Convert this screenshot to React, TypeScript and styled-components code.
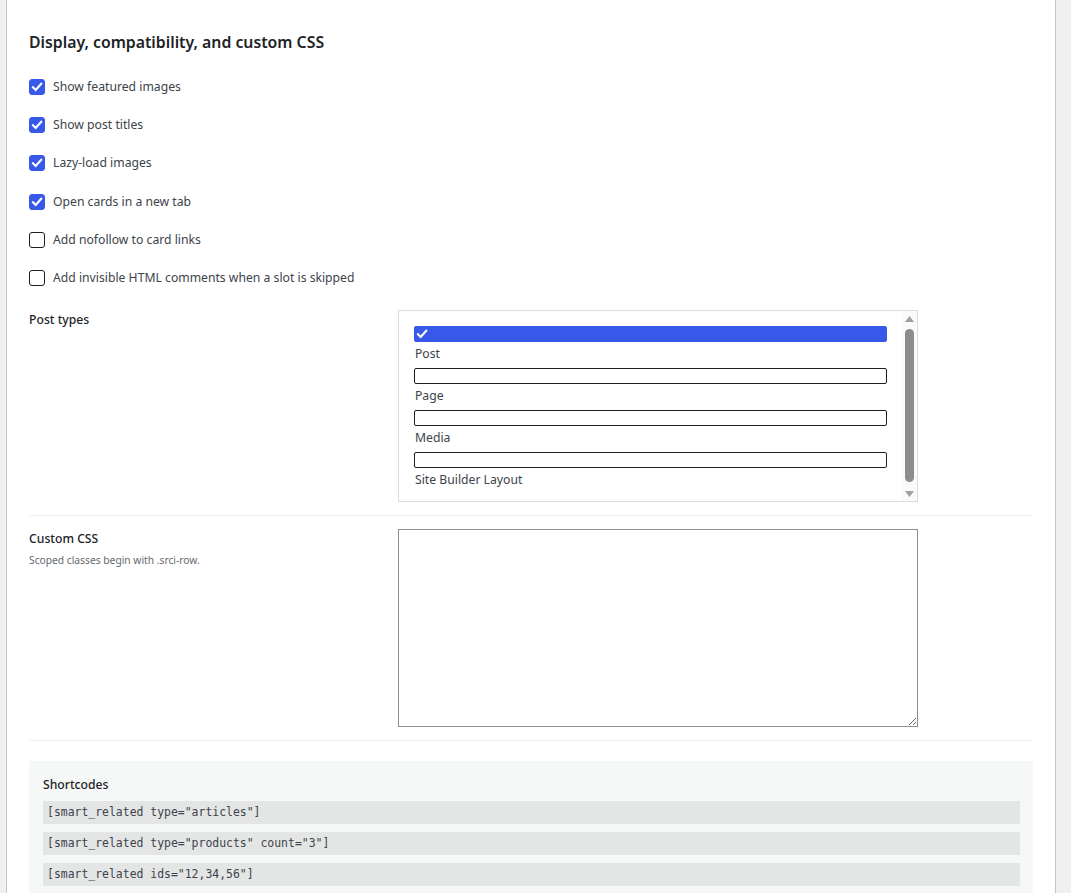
import React from "react";
import styled, { createGlobalStyle } from "styled-components";

const GlobalStyle = createGlobalStyle`
  * { box-sizing: border-box; }
  html, body { margin: 0; padding: 0; height: 100%; overflow: hidden; }
  body {
    background: #f0f0f1;
    font-family: "Noto Sans", "Open Sans", sans-serif;
    color: #3c434a;
  }
`;

const Page = styled.div`
  height: 100vh;
  padding: 0 15px 0 6px;
`;

const Card = styled.div`
  height: 100%;
  background: #fff;
  border-left: 1px solid #c3c4c7;
  border-right: 1px solid #c3c4c7;
  padding: 31px 22px 0;
`;

const Heading = styled.h2`
  margin: 0 0 25px;
  font-size: 15.8px;
  line-height: 22px;
  font-weight: 600;
  color: #1d2327;
`;

const CheckList = styled.div`
  display: flex;
  flex-direction: column;
  gap: 20.2px;
  margin-bottom: 23.25px;
`;

const CheckRow = styled.label`
  display: flex;
  align-items: center;
  gap: 8px;
  height: 18px;
  font-size: 12.2px;
  line-height: 18px;
  color: #3c434a;
`;

const Box = styled.span<{ $on: boolean }>`
  flex: none;
  width: 16px;
  height: 16px;
  border-radius: 3px;
  border: 1px solid ${(p) => (p.$on ? "#3858e9" : "#1e1e1e")};
  background: ${(p) => (p.$on ? "#3858e9" : "#fff")};
  display: flex;
  align-items: center;
  justify-content: center;
`;

const FieldRow = styled.div<{ $first?: boolean }>`
  display: grid;
  grid-template-columns: 369px 520px;
  padding: ${(p) => (p.$first ? "0" : "13px")} 0 13px;
  border-bottom: 1px solid #f0f0f1;
`;

const FieldLabel = styled.div`
  padding-top: 1px;
  font-size: 12.2px;
  line-height: 18px;
  font-weight: 500;
  color: #1d2327;
`;

const Hint = styled.div`
  margin-top: 5px;
  font-size: 10.25px;
  line-height: 14px;
  color: #646970;
`;

const ListBox = styled.div`
  display: flex;
  height: 192px;
  border: 1px solid #dcdcde;
`;

const ListScroll = styled.div`
  flex: 1;
  min-width: 0;
  overflow: hidden;
  padding: 15px;
`;

const ScrollBar = styled.div`
  flex: none;
  width: 15px;
  display: flex;
  flex-direction: column;
  align-items: center;
  background: #fafafa;
`;

const ScrollArrow = styled.div`
  flex: none;
  height: 15px;
  width: 15px;
  display: flex;
  align-items: center;
  justify-content: center;
`;

const Thumb = styled.div`
  flex: 1;
  width: 9px;
  margin: 3px 0 4px;
  border-radius: 5px;
  background: #8c8c8c;
`;

const ListItem = styled.div`
  display: flex;
  flex-direction: column;
`;

const Bar = styled.span<{ $on: boolean }>`
  display: flex;
  align-items: center;
  width: 100%;
  height: 16px;
  padding-left: 1px;
  border-radius: 2px;
  border: 1px solid ${(p) => (p.$on ? "#3858e9" : "#1e1e1e")};
  background: ${(p) => (p.$on ? "#3858e9" : "#fff")};
`;

const ItemText = styled.span`
  margin: 3px 0 6px;
  padding-left: 1px;
  font-size: 12.2px;
  line-height: 17px;
  color: #3c434a;
`;

const TextArea = styled.textarea`
  display: block;
  width: 520px;
  height: 198px;
  margin: 0;
  border: 1px solid #8c8f94;
  border-radius: 0;
  resize: vertical;
  font-family: "DejaVu Sans Mono", monospace;
  font-size: 12px;
`;

const Shortcodes = styled.div`
  margin-top: 20px;
  background: #f6f7f7;
  padding: 15px 13px 14px 14px;
`;

const ShortTitle = styled.div`
  margin-bottom: 8px;
  font-size: 12.2px;
  line-height: 17px;
  font-weight: 500;
  color: #1d2327;
`;

const Code = styled.code`
  display: block;
  height: 23px;
  margin-bottom: 8px;
  padding: 0 4px;
  background: rgba(0, 0, 0, 0.07);
  font-family: "DejaVu Sans Mono", "Liberation Mono", monospace;
  font-size: 11.44px;
  line-height: 23px;
  color: #3c434a;
  white-space: pre;
`;

const Check = ({ size = 12 }: { size?: number }) => (
  <svg width={size} height={size} viewBox="0 0 12 12" aria-hidden="true">
    <path
      d="M2 6.3 L4.7 9 L10.2 2.8"
      fill="none"
      stroke="#fff"
      strokeWidth="2.1"
      strokeLinecap="square"
      strokeLinejoin="miter"
    />
  </svg>
);

const Triangle = ({ down }: { down?: boolean }) => (
  <svg width="9" height="6" viewBox="0 0 9 6" aria-hidden="true">
    <path d={down ? "M0 0 H9 L4.5 6 Z" : "M0 6 H9 L4.5 0 Z"} fill="#a0a0a0" />
  </svg>
);

const options = [
  { label: "Show featured images", on: true },
  { label: "Show post titles", on: true },
  { label: "Lazy-load images", on: true },
  { label: "Open cards in a new tab", on: true },
  { label: "Add nofollow to card links", on: false },
  { label: "Add invisible HTML comments when a slot is skipped", on: false },
];

const postTypes = [
  { label: "Post", on: true },
  { label: "Page", on: false },
  { label: "Media", on: false },
  { label: "Site Builder Layout", on: false },
];

const codes = [
  '[smart_related type="articles"]',
  '[smart_related type="products" count="3"]',
  '[smart_related ids="12,34,56"]',
];

export default function App() {
  return (
    <>
      <GlobalStyle />
      <Page>
        <Card>
          <Heading>Display, compatibility, and custom CSS</Heading>
          <CheckList>
            {options.map((o) => (
              <CheckRow key={o.label}>
                <Box $on={o.on}>{o.on && <Check />}</Box>
                {o.label}
              </CheckRow>
            ))}
          </CheckList>
          <FieldRow $first>
            <FieldLabel>Post types</FieldLabel>
            <ListBox>
              <ListScroll>
                {postTypes.map((p) => (
                  <ListItem key={p.label}>
                    <Bar $on={p.on}>{p.on && <Check />}</Bar>
                    <ItemText>{p.label}</ItemText>
                  </ListItem>
                ))}
              </ListScroll>
              <ScrollBar>
                <ScrollArrow>
                  <Triangle />
                </ScrollArrow>
                <Thumb />
                <ScrollArrow>
                  <Triangle down />
                </ScrollArrow>
              </ScrollBar>
            </ListBox>
          </FieldRow>
          <FieldRow>
            <div>
              <FieldLabel>Custom CSS</FieldLabel>
              <Hint>Scoped classes begin with .srci-row.</Hint>
            </div>
            <TextArea />
          </FieldRow>
          <Shortcodes>
            <ShortTitle>Shortcodes</ShortTitle>
            {codes.map((c) => (
              <Code key={c}>{c}</Code>
            ))}
          </Shortcodes>
        </Card>
      </Page>
    </>
  );
}
